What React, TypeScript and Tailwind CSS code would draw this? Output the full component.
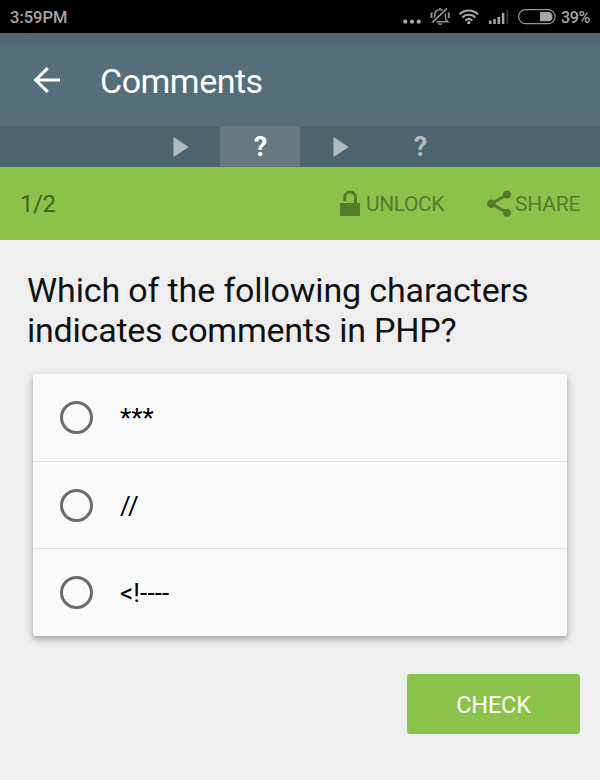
import React from "react";

function StatusBar() {
  return (
    <div className="flex h-[33px] items-center bg-black pl-[10px] pr-[10px] text-[16px] font-medium text-[#a6a6a6]">
      <span className="grow pt-[2px] text-[16.5px] leading-[31px]">3:59PM</span>
      <svg width="158" height="33" viewBox="400 0 158 33" fill="none" className="mr-[3px]">
        <g fill="#a9a9a9">
          <circle cx="405.300" cy="21.700" r="2.100" />
          <circle cx="412" cy="21.700" r="2.100" />
          <circle cx="418.700" cy="21.700" r="2.100" />
        </g>
        <g stroke="#8e8e8e" strokeWidth="1.500">
          <path d="M433.500 21.700h14c-2-1.500-2.200-3-2.200-6.200 0-3.800-2-5.700-5.300-5.700s-5.300 2-5.300 5.700c0 3.200-.2 4.700-2.200 6.200z" />
          <path d="M438 23.400c.8 1 3.300 1 4.200 0M440 8v2" />
          <path d="M431.500 12.500v5.500M448.800 12.500v5.500" strokeWidth="2" />
          <path d="M447.500 8.800 431.800 23.300" stroke="#000" strokeWidth="4" />
          <path d="M447 8.500 432.300 22.500" stroke="#a9a9a9" />
        </g>
        <g stroke="#a9a9a9" strokeWidth="2">
          <path d="M459.500 14.400a13.300 13.300 0 0 1 18.600 0" />
          <path d="M462.300 17.600a9 9 0 0 1 13 0" />
          <path d="M465.200 20.600a5 5 0 0 1 7.200 0" />
        </g>
        <circle cx="468.800" cy="22.600" r="1.700" fill="#a9a9a9" />
        <g fill="#a6a6a6">
          <path d="M489 20.500h2.500v3.500H489zM493.300 19h2.500v5h-2.500zM497.600 17h2.500v7h-2.500zM501.900 13h2.500v11h-2.500z" />
          <path d="M506.300 10h2v14h-2z" fill="#353535" />
        </g>
        <rect x="518.600" y="9.600" width="36.500" height="14" rx="7" stroke="#959595" strokeWidth="1.200" />
        <path d="M540 12h8.500a4.700 4.700 0 0 1 0 9.300H540z" fill="#a6a6a6" />
      </svg>
      <span className="w-[29px] whitespace-nowrap pt-[2px] leading-[31px] tracking-[-0.3px]">39%</span>
    </div>
  );
}

function Tab({ kind, active }: { kind: "play" | "quiz"; active?: boolean }) {
  return (
    <div
      className={
        active
          ? "flex w-20 items-center justify-center bg-[#667981] text-white"
          : "flex w-20 items-center justify-center text-[#b1bbc0]"
      }
    >
      {kind === "play" ? (
        <svg width="16" height="20" viewBox="0 0 16 20" className="ml-px">
          <path d="M.5 0 15.700 10 .5 20z" fill="currentColor" />
        </svg>
      ) : (
        <span className="pl-px pt-[2px] text-[27px] font-bold leading-[39px]">?</span>
      )}
    </div>
  );
}

function Option({ label }: { label: string }) {
  return (
    <div className="flex grow basis-0 items-center pl-[27px]">
      <span className="size-[33px] rounded-full border-3 border-[#6b6b6b]" />
      <span className="ml-[27px] pt-px text-[26px] leading-[28px] tracking-[0.1px] text-black">{label}</span>
    </div>
  );
}

export default function App() {
  return (
    <div className="flex h-[780px] w-[600px] flex-col bg-[#eeeeee] font-[Roboto,sans-serif]">
      <StatusBar />
      <header className="flex h-[93px] items-center bg-[#566e7a] bg-linear-to-b from-[#4e6570] to-[#566e7a] to-20% pl-[33px] text-white">
        <svg width="28" height="28" viewBox="0 0 28 28" fill="none" stroke="#fff" strokeWidth="3">
          <path d="M27 14H3M14.700 2.100 2.600 14l12.100 11.900" />
        </svg>
        <h1 className="ml-[39px] pt-[2px] text-[34px] leading-10 tracking-[-0.5px]">Comments</h1>
      </header>
      <nav className="flex h-[41px] justify-center bg-[#4e646e]">
        <Tab kind="play" />
        <Tab kind="quiz" active />
        <Tab kind="play" />
        <Tab kind="quiz" />
      </nav>
      <div className="flex h-[73px] items-center bg-[#8bc34a] pl-5 pr-5 text-[21px] text-[#557b2b]">
        <span className="grow pt-px text-[24px] tracking-[-0.4px] text-[#43611f]">1/2</span>
        <svg width="20" height="26" viewBox="0 0 20 26" fill="none" className="mb-px">
          <path d="M0 13h20v13H0z" fill="#557b2b" />
          <path d="M4.700 11V7.500a5.400 5.400 0 0 1 10.800 0V14" stroke="#557b2b" strokeWidth="3" />
        </svg>
        <span className="ml-[6px] w-[78px] whitespace-nowrap pt-[3px] tracking-[-0.4px]">UNLOCK</span>
        <svg width="25" height="28" viewBox="0 0 25 28" className="ml-[43px]">
          <path d="M20 4.500 4.500 13.700 20 22.700" fill="none" stroke="#557b2b" strokeWidth="3" />
          <g fill="#557b2b">
            <circle cx="20" cy="4.500" r="4" />
            <circle cx="4.300" cy="13.700" r="4.300" />
            <circle cx="20" cy="22.700" r="4" />
          </g>
        </svg>
        <span className="ml-[3px] w-[65px] whitespace-nowrap pt-[3px] tracking-[-0.2px]">SHARE</span>
      </div>
      <main className="flex grow flex-col">
        <h2 className="ml-[27px] mt-[31px] h-[79px] whitespace-nowrap text-[34px] leading-[39.5px] tracking-[-0.13px] text-[#111]">
          Which of the following characters
          <br />
          <span className="tracking-[-0.23px]">indicates comments in PHP?</span>
        </h2>
        <section className="mx-[33px] mt-6 flex h-[262px] flex-col divide-y divide-[#dedede] rounded-[3px] bg-[#fafafa] shadow-[0_3px_7px_rgba(0,0,0,0.35)]">
          <Option label="***" />
          <Option label="//" />
          <Option label="<!----" />
        </section>
        <button className="mr-5 mt-[38px] h-[60px] w-[173px] self-end rounded-[3px] bg-[#8bc34a] pt-[3px] text-[23.5px] tracking-[-0.2px] text-white">
          CHECK
        </button>
      </main>
    </div>
  );
}
